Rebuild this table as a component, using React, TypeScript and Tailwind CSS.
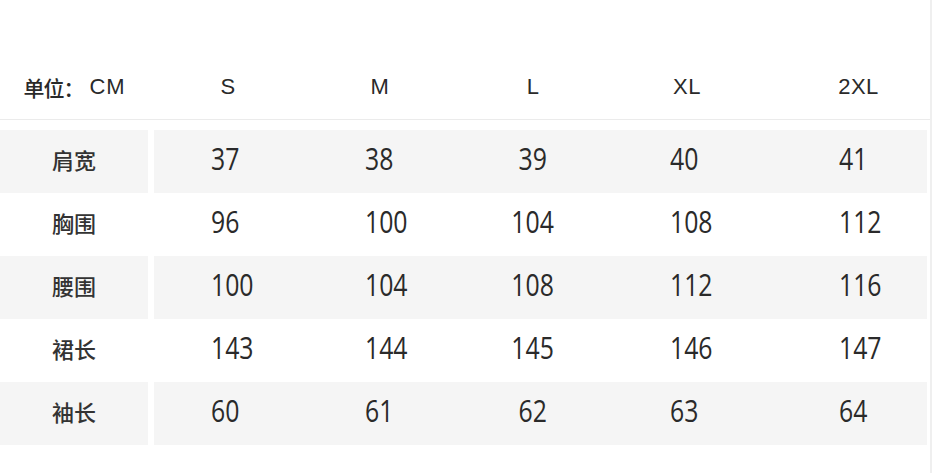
const sizes = ["S", "M", "L", "XL", "2XL"];

const rows: { label: string; values: string[] }[] = [
  { label: "肩宽", values: ["37", "38", "39", "40", "41"] },
  { label: "胸围", values: ["96", "100", "104", "108", "112"] },
  { label: "腰围", values: ["100", "104", "108", "112", "116"] },
  { label: "裙长", values: ["143", "144", "145", "146", "147"] },
  { label: "袖长", values: ["60", "61", "62", "63", "64"] },
];

// column widths inside the value area, plus where the numbers start
const cols = [
  { w: "w-[148px]", head: "", num: "pl-[57px] justify-start" },
  { w: "w-[156px]", head: "", num: "pl-[63px] justify-start" },
  { w: "w-[150px]", head: "", num: "justify-center" },
  { w: "w-[158px]", head: "", num: "pl-[62px] justify-start" },
  { w: "w-[161px]", head: "pl-[24px]", num: "pl-[73px] justify-start" },
];

export default function App() {
  return (
    <div className="w-[934px] h-[473px] bg-white overflow-hidden font-['Liberation_Sans','Noto_Sans_CJK_SC',sans-serif] text-[#2a2a2a]">
      <div className="w-[932px] h-full border-r-2 border-[#efefef]">
        {/* header */}
        <div className="flex h-[119px] items-end pb-[20px]">
          <div className="w-[148px] flex justify-center pl-[1px] text-[21px] leading-[24px] font-medium font-['Noto_Sans_CJK_SC',sans-serif]">
            <span className="tracking-[-1px]">单位</span>
            <span className="w-[26px]">：</span>
            <span className="font-['Liberation_Sans',sans-serif] text-[22px] tracking-[1px]">CM</span>
          </div>
          <div className="w-[6px]" />
          {sizes.map((s, i) => (
            <div
              key={s}
              className={`${cols[i].w} ${cols[i].head} flex justify-center text-[22px] leading-[24px] tracking-[0.5px]`}
            >
              {s}
            </div>
          ))}
        </div>
        <div className="h-px w-[930px] bg-[#ebebeb]" />
        <div className="h-[10px]" />

        {/* rows */}
        {rows.map((row, r) => {
          const bg = r % 2 === 0 ? "bg-[#f5f5f5]" : "bg-white";
          return (
            <div key={row.label} className="flex h-[63px]">
              <div
                className={`w-[148px] ${bg} flex items-center justify-center pb-[4px] text-[22px] font-medium font-['Noto_Sans_CJK_SC',sans-serif] text-[#333]`}
              >
                {row.label}
              </div>
              <div className="w-[6px]" />
              <div className={`w-[773px] ${bg} flex`}>
                {row.values.map((v, i) => (
                  <div key={i} className={`${cols[i].w} ${cols[i].num} flex items-center pb-[6px]`}>
                    <span
                      className={`inline-block font-['Open_Sans',sans-serif] font-normal text-[31px] leading-none scale-x-[0.8] ${
                        i === 2 ? "origin-center" : "origin-left"
                      }`}
                    >
                      {v}
                    </span>
                  </div>
                ))}
              </div>
            </div>
          );
        })}
      </div>
    </div>
  );
}
